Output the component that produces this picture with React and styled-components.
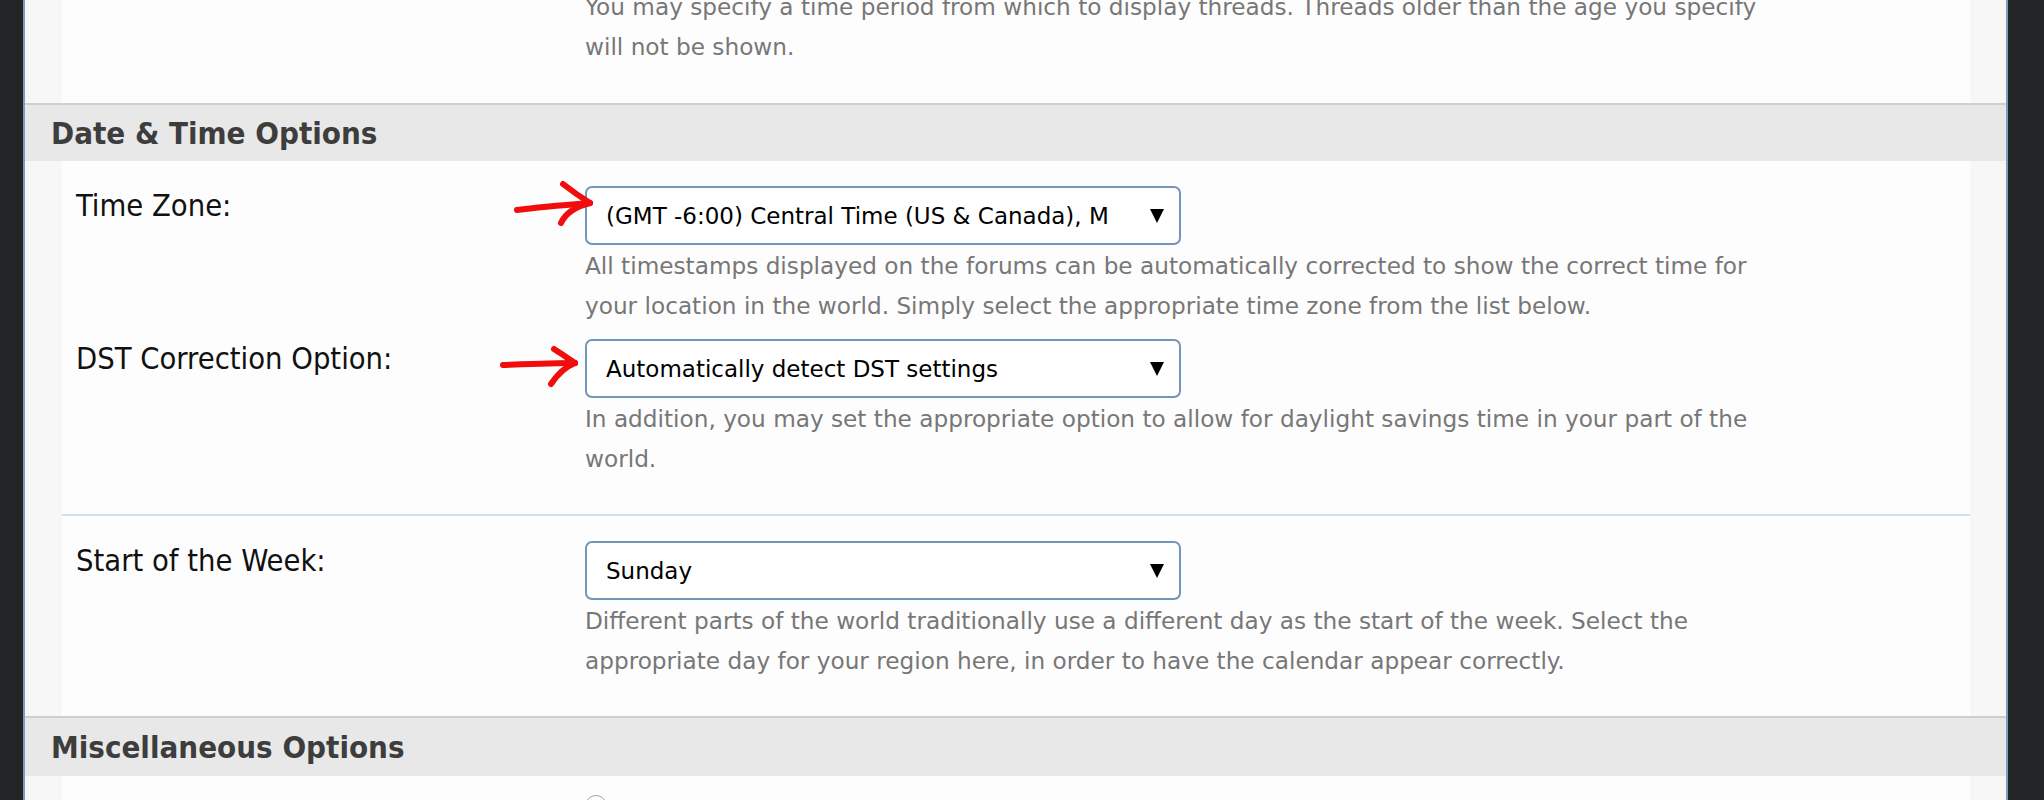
import React from 'react'
import styled, { createGlobalStyle } from 'styled-components'

const GlobalStyle = createGlobalStyle`
  html, body {
    margin: 0;
    padding: 0;
    background: #232425;
  }
`;

const tahoma = `"DejaVu Sans Condensed", "Open Sans", sans-serif`;
const verdana = `"DejaVu Sans", Verdana, sans-serif`;

const Page = styled.div`
  display: flex;
  height: 800px;
  overflow: hidden;
  padding-left: 23px;
`;

const Panel = styled.div`
  width: 1981px;
  border-left: 2px solid #7b9dc1;
  border-right: 2px solid #7b9dc1;
  background: #f7f7f7;
`;

const Block = styled.div`
  margin: 0 36px 0 37px;
  background: #fdfdfd;
  padding: ${(p) => p.$pad || '0'};
`;

const SectionHeader = styled.h2`
  margin: 0;
  height: ${(p) => p.$height || 56}px;
  display: flex;
  align-items: center;
  padding-left: 26px;
  border-top: 2px solid #cfcfcf;
  background: #e8e8e8;
  font-family: ${tahoma};
  font-weight: bold;
  font-size: 31px;
  color: #3d3d3d;
`;

const Group = styled.div`
  display: flex;
  flex-direction: column;
  gap: 13px;
  padding: 25px 0 35px;
  border-top: ${(p) => (p.$divided ? '2px solid #d3e1ed' : 'none')};
`;

const Row = styled.div`
  display: grid;
  grid-template-columns: 523px 1fr;
`;

const Label = styled.div`
  padding-left: 14px;
  font-family: ${tahoma};
  font-size: 30.6px;
  line-height: 40px;
  color: #111;
`;

const Field = styled.div`
  position: relative;
`;

const Select = styled.div`
  box-sizing: border-box;
  width: 596px;
  height: 59px;
  display: flex;
  align-items: center;
  justify-content: space-between;
  padding: 0 15px 0 19px;
  border: 2px solid #7395b8;
  border-radius: 7px;
  background: #fff;
  font-family: ${verdana};
  font-size: 23px;
  color: #000;
  white-space: nowrap;
  overflow: hidden;
`;

const Caret = styled.span`
  width: 0;
  height: 0;
  border-left: 7px solid transparent;
  border-right: 7px solid transparent;
  border-top: 14px solid #000;
`;

const Desc = styled.p`
  margin: ${(p) => p.$top || '1px'} 0 0;
  width: 1195px;
  font-family: ${verdana};
  font-size: 23.2px;
  line-height: 40px;
  color: #777;
`;

const Mark = styled.svg`
  position: absolute;
  left: ${(p) => p.$left}px;
  top: ${(p) => p.$top}px;
  width: 100px;
  height: 60px;
  overflow: visible;

  path {
    fill: none;
    stroke: #f20d0d;
    stroke-width: 6;
    stroke-linecap: round;
    stroke-linejoin: round;
  }
`;

const Radio = styled.span`
  display: block;
  width: 20px;
  height: 20px;
  border-radius: 50%;
  border: 1px solid #a0a0a0;
  background: #fff;
`;

const arrows = {
  zone: {
    left: -75,
    top: -10,
    paths: [
      'M7 34 C 30 31, 55 29, 80 27',
      'M53 8 C 62 15, 72 22, 80 27',
      'M80 27 C 68 30, 56 36, 51 47',
    ],
  },
  dst: {
    left: -90,
    top: 0,
    paths: [
      'M8 26 C 35 25, 60 24, 80 24',
      'M59 10 C 67 15, 74 20, 80 24',
      'M80 24 C 70 28, 62 36, 56 45',
    ],
  },
};

const Arrow = ({ kind }) => {
  const a = arrows[kind];
  return (
    <Mark $left={a.left} $top={a.top} viewBox="0 0 100 60">
      {a.paths.map((d, i) => (
        <path key={i} d={d} />
      ))}
    </Mark>
  );
};

const Option = ({ label, value, arrow, children }) => (
  <Row>
    <Label>{label}</Label>
    <Field>
      {arrow && <Arrow kind={arrow} />}
      <Select>
        <span>{value}</span>
        <Caret />
      </Select>
      <Desc>{children}</Desc>
    </Field>
  </Row>
);

const App = () => {
  return (
    <>
      <GlobalStyle />
      <Page>
        <Panel>
          <Block $pad="0 0 36px">
            <Row>
              <div />
              <Desc $top="-13px">
                You may specify a time period from which to display threads. Threads older than the age you specify will not be shown.
              </Desc>
            </Row>
          </Block>

          <SectionHeader>Date &amp; Time Options</SectionHeader>
          <Block>
            <Group>
              <Option
                label="Time Zone:"
                value="(GMT -6:00) Central Time (US & Canada), M"
                arrow="zone"
              >
                All timestamps displayed on the forums can be automatically corrected to show the correct time for your location in the world. Simply select the appropriate time zone from the list below.
              </Option>
              <Option
                label="DST Correction Option:"
                value="Automatically detect DST settings"
                arrow="dst"
              >
                In addition, you may set the appropriate option to allow for daylight savings time in your part of the world.
              </Option>
            </Group>
            <Group $divided>
              <Option label="Start of the Week:" value="Sunday">
                Different parts of the world traditionally use a different day as the start of the week. Select the appropriate day for your region here, in order to have the calendar appear correctly.
              </Option>
            </Group>
          </Block>

          <SectionHeader $height={58}>Miscellaneous Options</SectionHeader>
          <Block $pad="19px 0 0">
            <Row>
              <div />
              <Radio />
            </Row>
          </Block>
        </Panel>
      </Page>
    </>
  );
};

export default App;
